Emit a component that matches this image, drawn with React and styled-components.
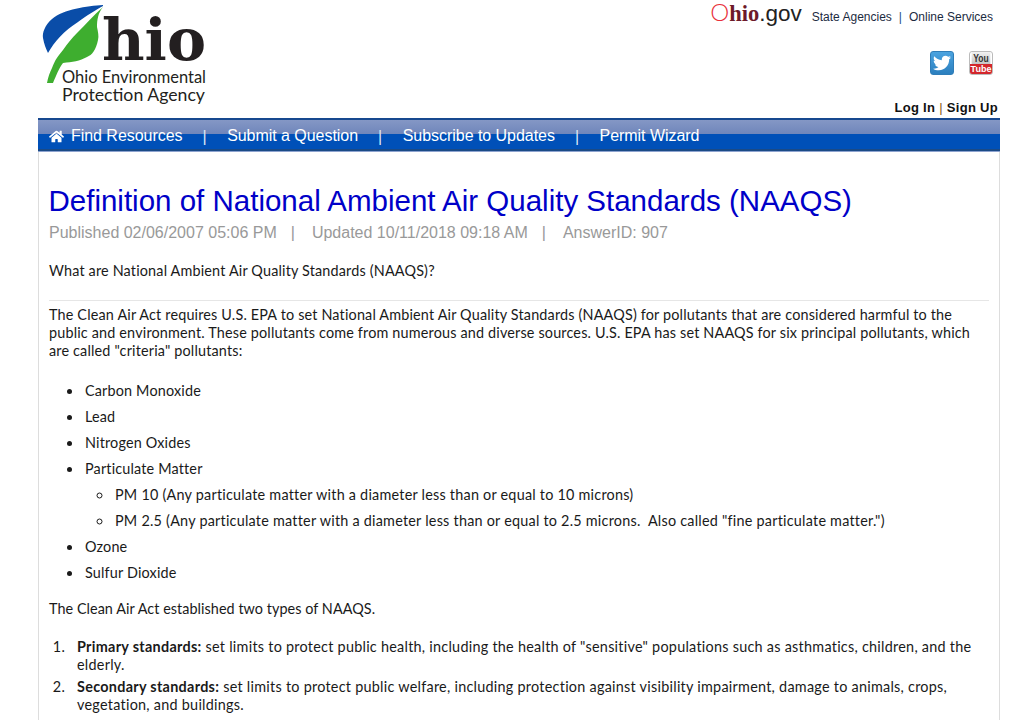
import React from "react";
import styled, { createGlobalStyle } from "styled-components";
import { FaHome, FaTwitter } from "react-icons/fa";

const Global = createGlobalStyle`
  html, body { margin: 0; padding: 0; background: #fff; }
  body { font-family: "Liberation Sans", Arial, sans-serif; overflow: hidden; height: 720px; }
`;
const Page = styled.div`
  width: 962px;
  margin-left: 38px;
`;
const Header = styled.header`
  height: 118px;
  display: flex;
  justify-content: space-between;
`;
const Logo = styled.svg`
  display: block;
  margin-left: 4px;
  width: 172px;
  height: 110px;
`;
const HeaderRight = styled.div`
  display: flex;
  flex-direction: column;
  align-items: flex-end;
`;
const TopLine = styled.div`
  display: flex;
  align-items: baseline;
  margin: 0 7px 0 0;
  height: 26px;
  padding-top: 2px;
  line-height: 20px;
  box-sizing: border-box;
`;
const GovMark = styled.span`
  font-size: 22.5px;
  line-height: 20px;
  color: #222;
  margin-right: 10px;
  display: inline-flex;
  align-items: baseline;
`;
const GovO = styled.span`
  font-size: 24px;
  line-height: 20px;
  font-weight: 300;
  color: #e8303a;
  font-family: Lato, sans-serif;
`;
const GovHio = styled.span`
  font-family: "Liberation Serif", serif;
  font-weight: bold;
  color: #6d1a2a;
`;
const TopLinks = styled.span`
  font-size: 12px;
  color: #1c2b3f;
`;
const TopSep = styled.span`
  margin: 0 7px;
  color: #1d4a8c;
`;
const Social = styled.div`
  display: flex;
  gap: 15px;
  margin: 25px 7px 0 0;
`;
const Tile = styled.div`
  width: 24px;
  height: 24px;
  border-radius: 3px;
  overflow: hidden;
  box-sizing: border-box;
`;
const TwitterTile = styled(Tile)`
  background: linear-gradient(#4ba3df, #2b7fbe);
  border: 1px solid #2f7db8;
  color: #fff;
  display: flex;
  align-items: center;
  justify-content: center;
  font-size: 18px;
`;
const YoutubeTile = styled(Tile)`
  display: flex;
  flex-direction: column;
  align-items: center;
  font-family: "Liberation Sans", sans-serif;
  font-weight: bold;
  line-height: 1;
  border: 1px solid #bbb;
`;
const YouPart = styled.div`
  background: linear-gradient(#f2f2f2, #c4c4c4);
  color: #333;
  width: 100%;
  height: 12px;
  font-size: 10px;
  line-height: 13px;
  text-align: center;
  transform: scaleX(0.85);
`;
const TubePart = styled.div`
  background: #d3262c;
  color: #fff;
  width: 100%;
  height: 10px;
  font-size: 9px;
  text-align: center;
  line-height: 10px;
`;
const Account = styled.div`
  margin: 25px 2px 0 0;
  font-size: 13px;
  line-height: 16px;
  font-weight: bold;
  color: #111;
  letter-spacing: 0.3px;
`;
const AccountSep = styled.span`
  font-weight: normal;
  color: #8a5a10;
`;
const Nav = styled.nav`
  box-sizing: border-box;
  height: 34px;
  border-top: 2px solid #17488f;
  border-bottom: 1px solid #8da3cf;
  background: linear-gradient(#8497c5 0, #6f86bb 14px, #0050b8 14px, #0050b8 29px, #1b4a86 29px);
  display: flex;
  align-items: center;
  padding: 1px 0 0 11px;
  color: #fff;
  font-size: 16px;
  letter-spacing: -0.04px;
`;
const NavItem = styled.span`
  display: inline-flex;
  align-items: center;
  gap: 7px;
`;
const NavSep = styled.span`
  margin: 0 20.5px 0 20px;
  position: relative;
  top: 1px;
  color: #dfe8f6;
`;
const Panel = styled.main`
  box-sizing: border-box;
  height: 568px;
  border-left: 1px solid #ddd;
  border-right: 1px solid #ddd;
  padding: 32px 10px 0 10px;
  overflow: hidden;
`;
const Title = styled.h1`
  margin: 0 0 0 -0.5px;
  font-size: 29.5px;
  font-weight: normal;
  line-height: 34px;
  color: #0000c8;
`;
const Meta = styled.div`
  margin-top: 4px;
  font-size: 16px;
  line-height: 22px;
  color: #999;
`;
const MetaSep = styled.span`
  margin: 0 17px 0 14px;
`;
const Body = styled.div`
  font-family: Lato, "Open Sans", sans-serif;
  font-size: 14.4px;
  line-height: 18px;
  letter-spacing: 0.17px;
  font-variant-ligatures: none;
  color: #1a1a1a;
`;
const Question = styled(Body)`
  margin-top: 18px;
  padding-bottom: 20px;
  border-bottom: 1px solid #e6e6e6;
`;
const Prose = styled(Body)`
  padding-right: 11px;
`;
const Para = styled.p`
  margin: 5px 0 0;
`;
const Bullets = styled.ul`
  margin: 22px 0 0;
  padding: 0 0 0 34px;
  list-style: disc;
`;
const SubBullets = styled.ul`
  margin: 0;
  padding: 0 0 0 28px;
  list-style: circle;
  letter-spacing: 0.23px;
`;
const Item = styled.li`
  margin-top: 8px;
  padding-left: 2px;
`;
const Numbered = styled.ol`
  margin: 20px 0 0;
  padding: 0 0 0 20px;
  letter-spacing: 0.26px;
`;
const NumberItem = styled.li`
  margin-top: 4px;
  padding-left: 8px;
`;
const Strong = styled.b`
  letter-spacing: 0.3px;
`;
const Gap = styled.p`
  margin: 18px 0 0;
  letter-spacing: 0.05px;
`;

const LogoArt = () => (
  <Logo viewBox="0 0 172 110">
    <path d="M61 5 C45 6 22 9 10 19 C3 25 0 33 1 38 C2 44 4 49 6 53 C12 42 22 31 36 22 C44 16 54 10 61 6Z" fill="#0a4da8" />
    <path d="M61 7 C56 13 55 20 55 27 C56 32 57 36 56 40 C54 50 50 55 45 57 C38 61 30 62 21 63 C17 68 14 76 11 83 L5 83 C6 77 8 72 10 68 C13 60 16 56 21 50 C26 43 30 38 35 33 C43 25 52 15 61 7Z" fill="#3eae2f" />
    <text x="60" y="60" fontFamily="'DejaVu Serif', serif" fontWeight="bold" fontSize="58" fill="#231f20" textLength="104" lengthAdjust="spacingAndGlyphs">hio</text>
    <text x="20" y="83" fontFamily="Lato, sans-serif" fontSize="17" fill="#231f20" textLength="144" lengthAdjust="spacingAndGlyphs">Ohio Environmental</text>
    <text x="20" y="101" fontFamily="Lato, sans-serif" fontSize="17" fill="#231f20" textLength="143" lengthAdjust="spacingAndGlyphs">Protection Agency</text>
  </Logo>
);

export default function App() {
  return (
    <Page>
      <Global />
      <Header>
        <LogoArt />
        <HeaderRight>
          <TopLine>
            <GovMark><GovO>O</GovO><GovHio>hio</GovHio>.gov</GovMark>
            <TopLinks>State Agencies<TopSep>|</TopSep>Online Services</TopLinks>
          </TopLine>
          <Social>
            <TwitterTile><FaTwitter /></TwitterTile>
            <YoutubeTile><YouPart>You</YouPart><TubePart>Tube</TubePart></YoutubeTile>
          </Social>
          <Account>Log In <AccountSep>|</AccountSep> Sign Up</Account>
        </HeaderRight>
      </Header>
      <Nav>
        <NavItem><FaHome size={15} />Find Resources</NavItem>
        <NavSep>|</NavSep>
        <NavItem>Submit a Question</NavItem>
        <NavSep>|</NavSep>
        <NavItem>Subscribe to Updates</NavItem>
        <NavSep>|</NavSep>
        <NavItem>Permit Wizard</NavItem>
      </Nav>
      <Panel>
        <Title>Definition of National Ambient Air Quality Standards (NAAQS)</Title>
        <Meta>Published 02/06/2007 05:06 PM<MetaSep>|</MetaSep>Updated 10/11/2018 09:18 AM<MetaSep>|</MetaSep>AnswerID: 907</Meta>
        <Question>What are National Ambient Air Quality Standards (NAAQS)?</Question>
        <Prose>
          <Para>The Clean Air Act requires U.S. EPA to set National Ambient Air Quality Standards (NAAQS) for pollutants that are considered harmful to the public and environment. These pollutants come from numerous and diverse sources. U.S. EPA has set NAAQS for six principal pollutants, which are called "criteria" pollutants:</Para>
          <Bullets>
            <Item>Carbon Monoxide</Item>
            <Item>Lead</Item>
            <Item>Nitrogen Oxides</Item>
            <Item>Particulate Matter
              <SubBullets>
                <Item>PM 10 (Any particulate matter with a diameter less than or equal to 10 microns)</Item>
                <Item>PM 2.5 (Any particulate matter with a diameter less than or equal to 2.5 microns.&nbsp; Also called "fine particulate matter.")</Item>
              </SubBullets>
            </Item>
            <Item>Ozone</Item>
            <Item>Sulfur Dioxide</Item>
          </Bullets>
          <Gap>The Clean Air Act established two types of NAAQS.</Gap>
          <Numbered>
            <NumberItem><Strong>Primary standards:</Strong> set limits to protect public health, including the health of "sensitive" populations such as asthmatics, children, and the elderly.</NumberItem>
            <NumberItem><Strong>Secondary standards:</Strong> set limits to protect public welfare, including protection against visibility impairment, damage to animals, crops, vegetation, and buildings.</NumberItem>
          </Numbered>
        </Prose>
      </Panel>
    </Page>
  );
}
